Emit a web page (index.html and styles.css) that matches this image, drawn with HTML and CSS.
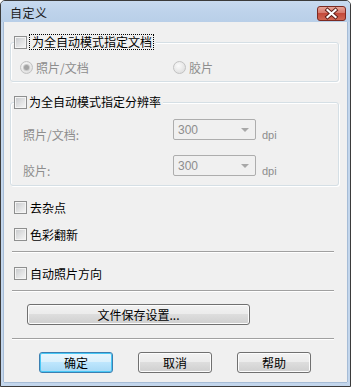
FILE: index.html
```html
<!DOCTYPE html>
<html lang="zh-CN">
<head>
<meta charset="utf-8">
<title>自定义</title>
<link rel="stylesheet" href="styles.css">
</head>
<body>
<div class="window">
  <div class="titlebar">
    <span class="title">自定义</span>
    <span class="close">
      <svg width="29" height="15" viewBox="0 0 29 15">
        <defs>
          <linearGradient id="cg" x1="0" y1="0" x2="0" y2="1">
            <stop offset="0" stop-color="#e8a89c"/>
            <stop offset="0.45" stop-color="#d77a6c"/>
            <stop offset="0.5" stop-color="#c44a3a"/>
            <stop offset="1" stop-color="#d26a55"/>
          </linearGradient>
        </defs>
        <rect x="0.5" y="0.5" width="28" height="14" rx="2.5" fill="url(#cg)" stroke="#7b2a22"/>
        <path d="M10.5 4 L18.5 11 M18.5 4 L10.5 11" stroke="#5b1c15" stroke-width="4" stroke-linecap="square"/>
        <path d="M10.5 4 L18.5 11 M18.5 4 L10.5 11" stroke="#ffffff" stroke-width="2.2" stroke-linecap="square"/>
      </svg>
    </span>
  </div>
  <div class="client">
    <div class="group g1">
      <div class="legend">
        <span class="cb"></span>
        <span class="focus">为全自动模式指定文档</span>
      </div>
      <div class="radios">
        <div class="radio-item first"><span class="radio checked"></span><span class="dis">照片/文档</span></div>
        <div class="radio-item"><span class="radio"></span><span class="dis">胶片</span></div>
      </div>
    </div>

    <div class="group g2">
      <div class="legend">
        <span class="cb"></span>
        <span class="ltext">为全自动模式指定分辨率</span>
      </div>
      <div class="res-row r1">
        <span class="res-label dis">照片/文档:</span>
        <span class="select"><span class="sval">300</span><span class="arrow"></span></span>
        <span class="unit dis">dpi</span>
      </div>
      <div class="res-row r2">
        <span class="res-label dis">胶片:</span>
        <span class="select"><span class="sval">300</span><span class="arrow"></span></span>
        <span class="unit dis">dpi</span>
      </div>
    </div>

    <div class="check-row c1"><span class="cb"></span><span class="ctext">去杂点</span></div>
    <div class="check-row c2"><span class="cb"></span><span class="ctext">色彩翻新</span></div>
    <div class="sep s1"></div>
    <div class="check-row c3"><span class="cb"></span><span class="ctext">自动照片方向</span></div>
    <div class="sep s2"></div>
    <div class="btn wide">文件保存设置...</div>
    <div class="sep s3"></div>
    <div class="btn-row">
      <div class="btn default">确定</div>
      <div class="btn">取消</div>
      <div class="btn">帮助</div>
    </div>
  </div>
</div>
</body>
</html>
```

FILE: styles.css
```css
* { box-sizing: border-box; }
html, body { margin: 0; padding: 0; }
body {
  font-family: "Noto Sans CJK SC", "Microsoft YaHei", "DejaVu Sans", sans-serif;
  font-size: 12px;
  color: #000;
  background: #fff;
}
.window {
  width: 351px;
  height: 387px;
  border: 1px solid #3b3b3b;
  border-radius: 5px 5px 0 0;
  background: #c3d6ec;
  padding: 0 3px 4px 3px;
  display: flex;
  flex-direction: column;
}
.titlebar {
  height: 21px;
  margin: 0 -3px;
  padding: 0 0 0 9px;
  display: flex;
  align-items: center;
  background: linear-gradient(#c8daef 0%, #bed3eb 50%, #b9cfe8 100%);
  border-radius: 4px 4px 0 0;
}
.title {
  flex: 1;
  line-height: 14px;
  padding-top: 2px;
  color: #1a1a1a;
  letter-spacing: 0.5px;
}
.close {
  display: flex;
  width: 29px;
  height: 15px;
  margin: 3px 4px 0 0;
}
.client {
  height: 360px;
  background: #f0f0f0;
  box-shadow: -1px 0 0 #a6bcd6, 1px 0 0 #a6bcd6, 0 1px 0 #a6bcd6;
  display: flex;
  flex-direction: column;
  align-items: flex-start;
}
.dis { color: #8d8d8d; }

.group {
  width: 329px;
  margin-left: 6px;
  border: 1px solid #d5dfe5;
  border-radius: 3px;
  box-shadow: inset 1px 1px 0 #fff, 1px 1px 0 #fff;
  display: flex;
  flex-direction: column;
  align-items: flex-start;
}
.g1 { margin-top: 20px; padding-bottom: 6px; }
.g2 { margin-top: 20px; padding-bottom: 9px; }
.legend {
  margin: -9px 0 0 3px;
  height: 16px;
  display: flex;
  align-items: center;
  background: #f0f0f0;
  padding-right: 2px;
  line-height: 14px;
}
.cb {
  width: 13px;
  height: 13px;
  flex: none;
  border: 1px solid #8e8f8f;
  background: linear-gradient(135deg, #c6c8cb 0%, #e2e3e4 55%, #f7f7f7 100%);
  box-shadow: inset 0 0 0 1px #f4f4f4;
}
.focus {
  margin-left: 2px;
  height: 16px;
  border: 1px dotted #000;
  padding: 0 1px 0 2px;
  display: flex;
  align-items: center;
}
.ltext { margin-left: 2px; }

.radios {
  margin-top: 9px;
  padding-left: 9px;
  display: flex;
  height: 16px;
  align-items: center;
}
.radio-item {
  display: flex;
  align-items: center;
  gap: 3px;
}
.radio-item.first { width: 153px; }
.radio {
  width: 13px;
  height: 13px;
  border-radius: 50%;
  border: 1px solid #c2c2c2;
  background: radial-gradient(circle at 40% 35%, #fafafa 0%, #e6e6e6 60%, #d8d8d8 100%);
  display: flex;
  align-items: center;
  justify-content: center;
}
.radio.checked::after {
  content: "";
  width: 5px;
  height: 5px;
  border-radius: 50%;
  background: #a3a3a3;
  box-shadow: 0 0 0 1px #c9c9c9;
}

.res-row {
  display: flex;
  align-items: center;
  height: 21px;
  padding-left: 12px;
}
.r1 { margin-top: 9px; }
.r2 { margin-top: 15px; }
.res-label {
  width: 150px;
  padding-top: 10px;
  line-height: 16px;
}
.select {
  width: 83px;
  height: 21px;
  border: 1px solid #adadad;
  border-radius: 2px;
  background: #f0f0f0;
  display: flex;
  align-items: center;
  justify-content: space-between;
  padding: 0 6px 0 4px;
  color: #8d8d8d;
  font-family: "Liberation Sans", Arial, sans-serif;
  font-size: 12px;
}
.arrow {
  width: 0;
  height: 0;
  border-left: 4px solid transparent;
  border-right: 4px solid transparent;
  border-top: 4px solid #a8a8a8;
}
.unit {
  margin-left: 6px;
  padding-top: 10px;
  font-family: "Liberation Sans", Arial, sans-serif;
  font-size: 11px;
}

.check-row {
  display: flex;
  align-items: center;
  height: 16px;
  margin-left: 10px;
}
.c1 { margin-top: 13px; }
.c2 { margin-top: 11px; }
.c3 { margin-top: 12px; }
.ctext { margin-left: 3px; }

.sep {
  width: 322px;
  margin-left: 8px;
  height: 2px;
  border-top: 1px solid #a0a0a0;
  border-bottom: 1px solid #ffffff;
}
.s1 { margin-top: 9px; }
.s2 { margin-top: 9px; }
.s3 { margin-top: 13px; }

.btn {
  width: 74px;
  height: 21px;
  border: 1px solid #707070;
  border-radius: 3px;
  background: linear-gradient(#f2f2f2 0%, #ebebeb 50%, #dddddd 50%, #cfcfcf 100%);
  box-shadow: inset 0 0 0 1px #fcfcfc;
  display: flex;
  align-items: center;
  justify-content: center;
  line-height: 14px;
}
.btn.wide {
  width: 223px;
  margin: 12px 0 0 23px;
}
.btn-row {
  display: flex;
  gap: 25px;
  margin: 12px 0 0 35px;
}
.btn.default {
  border-color: #3c7fb1;
  background: linear-gradient(#eaf6fd 0%, #d9f0fc 50%, #bee6fd 50%, #a7d9f5 100%);
  box-shadow: inset 0 0 0 1px #48c8f6;
}
```
